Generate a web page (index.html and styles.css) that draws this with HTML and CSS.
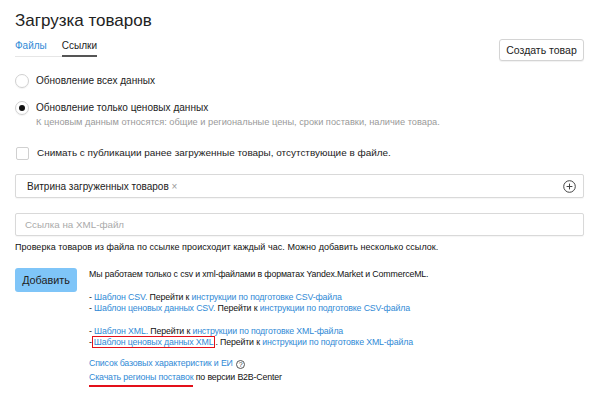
FILE: index.html
```html
<!DOCTYPE html>
<html lang="ru">
<head>
<meta charset="utf-8">
<title>Загрузка товаров</title>
<link rel="stylesheet" href="styles.css">
</head>
<body>
<div class="page">
  <div class="header">
    <div class="header-left">
      <h1 class="title">Загрузка товаров</h1>
      <div class="tabs">
        <span class="tab tab-link">Файлы</span>
        <span class="tab tab-active">Ссылки</span>
      </div>
    </div>
    <button class="btn btn-default">Создать товар</button>
  </div>

  <div class="radio-row first">
    <span class="radio"></span>
    <span class="label">Обновление всех данных</span>
  </div>
  <div class="radio-row second">
    <span class="radio checked"></span>
    <div class="radio-text">
      <div class="label">Обновление только ценовых данных</div>
      <div class="sublabel">К ценовым данным относятся: общие и региональные цены, сроки поставки, наличие товара.</div>
    </div>
  </div>

  <div class="check-row">
    <span class="checkbox"></span>
    <span class="label">Снимать с публикации ранее загруженные товары, отсутствующие в файле.</span>
  </div>

  <div class="field tag-field">
    <span class="tag">Витрина загруженных товаров <span class="tag-x">×</span></span>
    <svg class="plus" width="13" height="13" viewBox="0 0 13 13">
      <circle cx="6.5" cy="6.5" r="5.8" fill="none" stroke="#444" stroke-width="1"/>
      <path d="M6.5 3.6v5.8M3.6 6.5h5.8" stroke="#444" stroke-width="1"/>
    </svg>
  </div>

  <div class="field url-field">
    <span class="placeholder">Ссылка на XML-файл</span>
  </div>
  <div class="hint">Проверка товаров из файла по ссылке происходит каждый час. Можно добавить несколько ссылок.</div>

  <div class="bottom">
    <button class="btn btn-primary">Добавить</button>
    <div class="info">
      <div>Мы работаем только с csv и xml-файлами в форматах Yandex.Market и CommerceML.</div>
      <div class="group">
        <div>- <a class="link">Шаблон CSV.</a> Перейти к <a class="link">инструкции по подготовке CSV-файла</a></div>
        <div>- <a class="link">Шаблон ценовых данных CSV.</a> Перейти к <a class="link">инструкции по подготовке CSV-файла</a></div>
      </div>
      <div class="group">
        <div>- <a class="link">Шаблон XML.</a> Перейти к <a class="link">инструкции по подготовке XML-файла</a></div>
        <div>-<a class="link boxed">Шаблон ценовых данных XML</a>. Перейти к <a class="link">инструкции по подготовке XML-файла</a></div>
      </div>
      <div class="group group-last">
        <div><a class="link">Список базовых характеристик и ЕИ</a> <span class="help">?</span></div>
        <div class="last"><a class="link underlined">Скачать регионы поставок</a><span class="after">&nbsp;по версии B2B-Center</span></div>
      </div>
    </div>
  </div>
</div>
</body>
</html>
```
FILE: styles.css
```css
html, body {
  margin: 0;
  padding: 0;
  background: #fff;
}
body {
  font-family: "Liberation Sans", Arial, sans-serif;
  color: #222;
}
.page {
  padding: 11px 16px 0 15px;
}
.header {
  display: flex;
  justify-content: space-between;
  align-items: flex-start;
}
.title {
  margin: 0;
  font-size: 17px;
  line-height: 20px;
  font-weight: normal;
  color: #222;
}
.tabs {
  display: flex;
  margin-top: 9px;
  font-size: 10px;
  line-height: 12px;
}
.tab {
  padding-bottom: 4px;
  border-bottom: 1px solid #e6e6e6;
}
.tab-link {
  color: #318ad6;
  padding-right: 15px;
}
.tab-active {
  color: #222;
  border-bottom: 2px solid #555;
  padding-bottom: 3px;
}
.btn {
  font-family: "Liberation Sans", Arial, sans-serif;
  font-size: 10.5px;
  color: #222;
  border-radius: 3px;
  cursor: pointer;
}
.btn-default {
  margin-top: 28px;
  width: 85px;
  height: 22px;
  background: #fff;
  border: 1px solid #d4d4d4;
  box-shadow: 0 1px 1px rgba(0,0,0,0.06);
  padding: 0;
}
.radio-row {
  display: flex;
  align-items: flex-start;
  gap: 7px;
  font-size: 10.05px;
  line-height: 14px;
}
.radio-row.first {
  margin-top: 13px;
}
.radio-row.second {
  margin-top: 13px;
}
.radio {
  flex: none;
  width: 12px;
  height: 12px;
  border: 1px solid #d0d0d0;
  border-radius: 50%;
  position: relative;
  box-shadow: 0 1px 1px rgba(0,0,0,0.05);
}
.radio.checked::after {
  content: "";
  position: absolute;
  left: 3px;
  top: 3px;
  width: 6px;
  height: 6px;
  border-radius: 50%;
  background: #111;
}
.label {
  color: #222;
}
.sublabel {
  color: #9a9a9a;
  font-size: 9.25px;
  line-height: 12px;
  margin-top: 1px;
}
.check-row {
  display: flex;
  align-items: center;
  gap: 8px;
  margin-top: 18px;
  padding-left: 1px;
  font-size: 9.95px;
  line-height: 14px;
}
.checkbox {
  flex: none;
  width: 11px;
  height: 11px;
  border: 1px solid #d0d0d0;
  border-radius: 2px;
}
.field {
  box-sizing: border-box;
  height: 24px;
  border: 1px solid #d9d9d9;
  border-radius: 2px;
  display: flex;
  align-items: center;
  box-shadow: 0 1px 1px rgba(0,0,0,0.04);
}
.tag-field {
  margin-top: 14px;
  padding: 0 7px 0 11px;
  justify-content: space-between;
  font-size: 10px;
}
.tag-x {
  color: #999;
  font-size: 10px;
}
.plus {
  display: block;
}
.url-field {
  margin-top: 15px;
  height: 23px;
  padding-left: 9px;
  font-size: 9.8px;
}
.placeholder {
  color: #aaa;
}
.hint {
  margin-top: 5px;
  font-size: 9px;
  letter-spacing: 0.05px;
  line-height: 12px;
  color: #111;
}
.bottom {
  display: flex;
  align-items: flex-start;
  gap: 12px;
  margin-top: 15px;
}
.btn-primary {
  flex: none;
  width: 62px;
  height: 24px;
  background: #7fc5f8;
  border: none;
  padding: 0;
  font-size: 10.8px;
}
.info {
  font-size: 8.8px;
  letter-spacing: -0.15px;
  line-height: 11.5px;
  color: #111;
  margin-top: 1px;
}
.group {
  margin-top: 11.2px;
}
.group.group-last {
  margin-top: 9.3px;
}
.link {
  color: #318ad6;
  text-decoration: none;
}
.boxed {
  border: 1.5px solid #e3101a;
  padding: 0 1px;
  margin: -1.5px 0;
}
.last {
  display: flex;
  align-items: flex-start;
  margin-top: 2.5px;
}
.underlined {
  display: block;
  height: 11.5px;
  padding-bottom: 1px;
  border-bottom: 2px solid #e3101a;
}
.help {
  display: inline-block;
  box-sizing: border-box;
  width: 9px;
  height: 9px;
  border: 1px solid #555;
  border-radius: 50%;
  font-size: 7px;
  line-height: 7px;
  text-align: center;
  color: #444;
  vertical-align: -1px;
  margin-left: 1px;
}
```
